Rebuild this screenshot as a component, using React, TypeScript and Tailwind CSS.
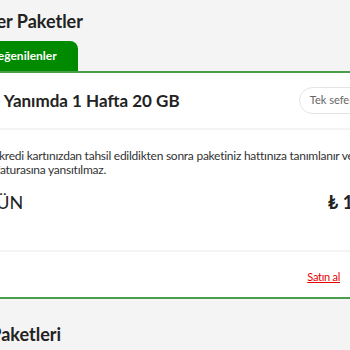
export default function App() {
  return (
    <div className="w-[350px] h-[350px] overflow-hidden bg-[#f4f4f4] font-['Lato',sans-serif] text-[#222]">
      {/* Section header */}
      <div className="h-[41px] flex items-center">
        <h2 className="-ml-[31px] whitespace-nowrap text-[18px] font-bold leading-none">Diğer Paketler</h2>
      </div>

      {/* Tabs */}
      <div className="flex items-end h-[30px]">
        <div className="-ml-[40px] h-[30px] w-[118px] pl-[40px] flex items-center bg-[#008a00] rounded-tr-[8px] text-white text-[12px] font-bold whitespace-nowrap">
          <span className="-ml-[10px]">Beğenilenler</span>
        </div>
      </div>
      <div className="h-[2px] bg-[#4a9d4a]" />

      {/* Package card */}
      <div className="bg-white">
        <div className="h-[55px] flex items-center justify-between">
          <h3 className="-ml-[74px] whitespace-nowrap text-[17px] font-bold leading-none">Her Yerde Yanımda 1 Hafta 20 GB</h3>
          <div className="-mr-[25px] h-[27px] px-[10px] flex items-center rounded-full border border-[#e4e4e4] text-[11px] text-[#666] whitespace-nowrap">
            Tek seferlik
          </div>
        </div>
        <div className="h-[2px] bg-[#f4f4f4]" />
        <div className="pt-[19px] pb-[9px] text-[12px] leading-[14px] tracking-[-0.25px] text-[#333] whitespace-nowrap">
          <p className="-ml-[10px]">e kredi kartınızdan tahsil edildikten sonra paketiniz hattınıza tanımlanır ve</p>
          <p className="-ml-[4px]">faturasına yansıtılmaz.</p>
        </div>
        <div className="h-[32px] flex items-center justify-between">
          <span className="-ml-[32px] whitespace-nowrap text-[18px]">7 GÜN</span>
          <span className="-mr-[24px] whitespace-nowrap text-[18px] font-bold">₺ 110</span>
        </div>
        <div className="h-[32px]" />
        <div className="h-[2px] bg-[#f4f4f4]" />
        <div className="h-[45px] flex items-center justify-end pr-[10px] pt-[5px]">
          <a className="text-[11px] tracking-tight text-[#e60000] underline">Satın al</a>
        </div>
      </div>
      <div className="h-[2px] bg-[#4a9d4a]" />

      {/* Next section */}
      <div className="pt-[26px]">
        <h2 className="-ml-[34px] whitespace-nowrap text-[18px] font-bold leading-none">Ek Paketleri</h2>
      </div>
    </div>
  );
}
